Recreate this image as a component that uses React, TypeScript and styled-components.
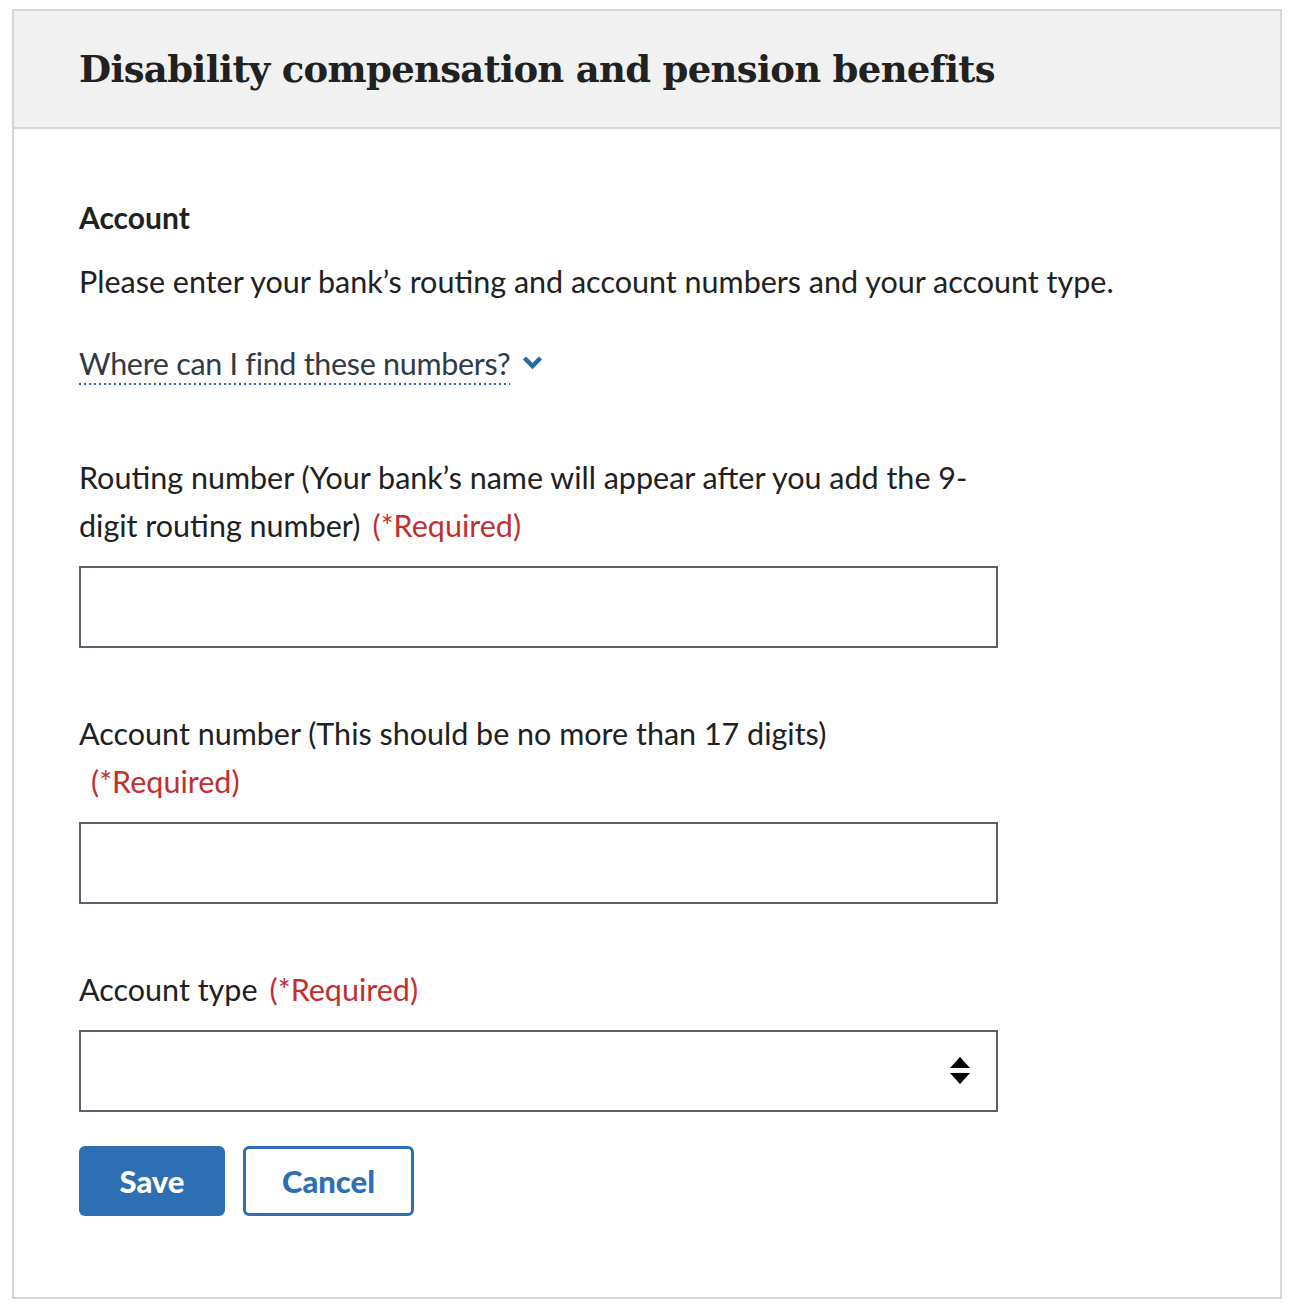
import React from "react";
import styled, { createGlobalStyle } from "styled-components";

const Global = createGlobalStyle`
  html, body { margin: 0; padding: 0; background: #ffffff; }
  body { font-family: Lato, "Noto Sans", sans-serif; color: #212121; }
`;

const Page = styled.div`
  padding: 9px 15px 0 12px;
`;

const Card = styled.section`
  border: 2px solid #d6d7d9;
  width: 1266px;
`;

const Header = styled.header`
  background: #f1f1f1;
  height: 116px;
  border-bottom: 2px solid #d6d7d9;
  display: flex;
  align-items: center;
  padding: 0 65px;
`;

const Title = styled.h2`
  margin: 0;
  font-family: "DejaVu Serif", serif;
  font-weight: 700;
  font-size: 37px;
  letter-spacing: -0.7px;
  color: #212121;
`;

const Body = styled.div`
  padding: 64px 65px 81px;
  font-size: 30.5px;
  line-height: 48px;
`;

const SectionTitle = styled.h3`
  margin: 0;
  font-size: 30px;
  line-height: 48px;
  font-weight: 700;
`;

const Intro = styled.p`
  margin: 16px 0 0;
`;

const LinkRow = styled.div`
  margin-top: 39px;
  display: flex;
  align-items: flex-start;
  gap: 12px;
`;

const HelpLink = styled.span`
  display: inline-block;
  color: #323a45;
  line-height: 38px;
  letter-spacing: -0.3px;
  padding-bottom: 3px;
  background-image: linear-gradient(to right, #2b6a9e 0, #2b6a9e 2px, transparent 2px);
  background-size: 5px 2px;
  background-repeat: repeat-x;
  background-position: 0 100%;
`;

const Chevron = styled.svg`
  margin-top: 11px;
  width: 21px;
  height: 16px;
`;

const Field = styled.div<{ $gap: number }>`
  margin-top: ${(p) => p.$gap}px;
`;

const Label = styled.label`
  display: block;
  max-width: 900px;
`;

const Required = styled.span`
  display: inline-block;
  margin-left: 12px;
  color: #c22f2f;
`;

const TextInput = styled.input`
  display: block;
  box-sizing: border-box;
  margin-top: 17px;
  width: 919px;
  height: 82px;
  border: 2px solid #5b616b;
  border-radius: 0;
  padding: 0 16px;
  font-size: 30px;
  font-family: inherit;
  background: #fff;
  outline: none;
`;

const SelectBox = styled.div`
  box-sizing: border-box;
  margin-top: 17px;
  width: 919px;
  height: 82px;
  border: 2px solid #5b616b;
  background: #fff;
  display: flex;
  align-items: center;
  justify-content: flex-end;
  padding-right: 26px;
`;

const Actions = styled.div`
  margin-top: 34px;
  display: flex;
  gap: 18px;
`;

const Button = styled.button<{ $variant: "primary" | "secondary" }>`
  box-sizing: border-box;
  height: 70px;
  padding: 0;
  width: ${(p) => (p.$variant === "primary" ? "146px" : "171px")};
  border-radius: 6px;
  font-family: Lato, "Noto Sans", sans-serif;
  font-weight: 900;
  font-size: 31px;
  cursor: pointer;
  background: ${(p) => (p.$variant === "primary" ? "#2e6fb4" : "#ffffff")};
  color: ${(p) => (p.$variant === "primary" ? "#ffffff" : "#2e6fb4")};
  border: ${(p) => (p.$variant === "primary" ? "none" : "3px solid #2e6fb4")};
`;

export default function App() {
  return (
    <>
      <Global />
      <Page>
        <Card>
          <Header>
            <Title>Disability compensation and pension benefits</Title>
          </Header>
          <Body>
            <SectionTitle>Account</SectionTitle>
            <Intro>
              Please enter your bank’s routing and account numbers and your account type.
            </Intro>
            <LinkRow>
              <HelpLink>Where can I find these numbers?</HelpLink>
              <Chevron viewBox="0 0 21 16">
                <path d="M2.5 3 L10.5 11 L18.5 3" fill="none" stroke="#2b6a9e" strokeWidth="4.5" strokeLinejoin="miter" />
              </Chevron>
            </LinkRow>
            <Field $gap={68}>
              <Label>
                Routing number (Your bank’s name will appear after you add the 9-digit routing number)
                <Required>(*Required)</Required>
              </Label>
              <TextInput type="text" />
            </Field>
            <Field $gap={61}>
              <Label>
                Account number (This should be no more than 17 digits)
                <Required>(*Required)</Required>
              </Label>
              <TextInput type="text" />
            </Field>
            <Field $gap={61}>
              <Label>
                Account type
                <Required>(*Required)</Required>
              </Label>
              <SelectBox>
                <svg width="20" height="30" viewBox="0 0 20 30">
                  <path d="M10 1 L20 12 L0 12 Z" fill="#000" />
                  <path d="M0 17 L20 17 L10 28 Z" fill="#000" />
                </svg>
              </SelectBox>
            </Field>
            <Actions>
              <Button $variant="primary">Save</Button>
              <Button $variant="secondary">Cancel</Button>
            </Actions>
          </Body>
        </Card>
      </Page>
    </>
  );
}
